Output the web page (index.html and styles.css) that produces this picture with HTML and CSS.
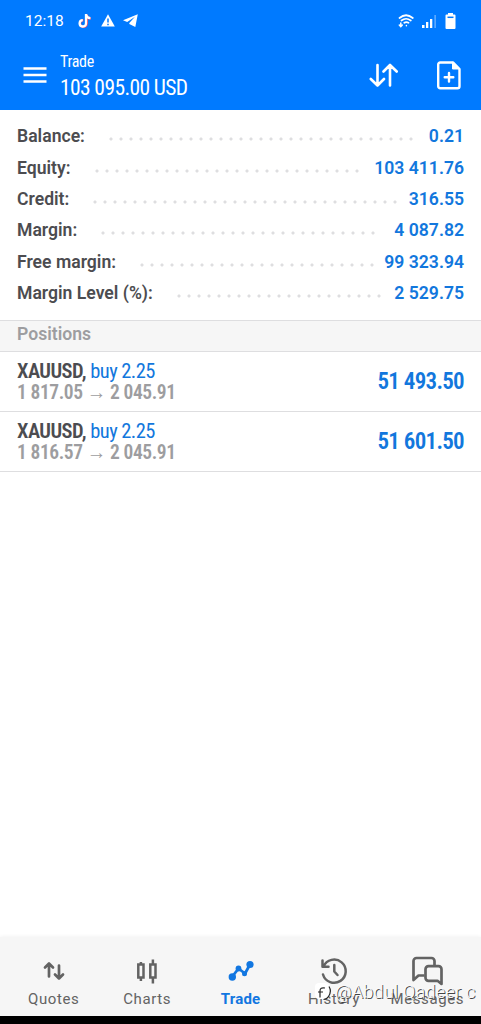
FILE: index.html
```html
<!DOCTYPE html>
<html lang="en">
<head>
  <meta charset="UTF-8">
  <meta name="viewport" content="width=device-width, initial-scale=1">
  <title>Trade</title>
  <link rel="stylesheet" href="styles.css">
</head>
<body>
  <div class="app">
    <header class="header">
      <div class="status-bar">
        <span class="clock">12:18</span>
        <svg class="tiktok" width="14" height="16" viewBox="0 0 14 16" fill="none" stroke-width="2.3">
          <path d="M8.8 1.5v9a3.4 3.4 0 1 1-3.4-3.4M8.8 2c.3 2.400 1.800 3.500 4 3.600" stroke="#f0506e"/>
          <path d="M8 1v9.500a3.200 3.200 0 1 1-3.200-3.400M8 1.500c.4 2.300 1.900 3.500 4.400 3.600" stroke="#fff"/>
        </svg>
        <svg class="warning" width="14" height="13" viewBox="0 0 14 13">
          <path d="M7 .3 13.800 12.500H.2z" fill="#fff"/>
          <path d="M7 4.500v4M7 9.700v1.500" stroke="#007aff" stroke-width="1.500"/>
        </svg>
        <svg class="telegram" width="15" height="13" viewBox="0 0 15 13" fill="#fff">
          <path d="M14.800.2 0 6.200l4.200 1.700L12 2.700 6.300 8.900v1.200l6 2.900z"/>
        </svg>
        <div class="status-right">
          <svg width="16" height="14" viewBox="0 0 16 14" fill="none" stroke="#fff" stroke-width="1.700" stroke-linecap="round">
            <path d="M1.500 4Q8-1.500 14.800 4M3.500 6.500Q8 3 12.800 6.500M6.300 8.800Q8.300 7.500 10.500 8.800"/>
            <path d="M8.400 11.600v.1M2.800 9v3.500M1.300 11l1.500 1.700L4.300 11" stroke-width="1.500"/>
          </svg>
          <svg class="signal" width="15" height="14" viewBox="0 0 15 14" fill="#fff">
            <path d="M0 11h2.500v3H0zM4 8h2.300v6H4zM8 5h2.300v9H8z"/>
            <path d="M12.300 1H14v13h-1.700z" opacity=".35"/>
          </svg>
          <svg width="11" height="16" viewBox="0 0 11 16">
            <path d="M3 0h5v1.500h1.500a1 1 0 0 1 1 1V15a1 1 0 0 1-1 1h-8a1 1 0 0 1-1-1V2.500a1 1 0 0 1 1-1H3z" fill="#fff"/>
            <path d="M2.500 4.300h6" stroke="#007aff" stroke-width="1.500"/>
          </svg>
        </div>
      </div>
      <div class="toolbar">
        <svg width="24" height="16" viewBox="0 0 24 16" stroke="#fff" stroke-width="2.300">
          <path d="M.5 1.500h23M.5 8h23M.5 14.500h23"/>
        </svg>
        <div class="title">
          <div class="title-name">Trade</div>
          <div class="title-sum">103 095.00 USD</div>
        </div>
        <svg class="sort" width="29" height="24" viewBox="0 0 29 24" fill="none" stroke="#fff" stroke-width="2.600" stroke-linecap="round" stroke-linejoin="round">
          <path d="M8.500 2v20.500M1.800 16l6.700 6.500L15 16M21 22.500V2M14.500 8.500 21 2l6.700 6.500"/>
        </svg>
        <svg width="24" height="29" viewBox="0 0 24 29" fill="none" stroke="#fff" stroke-width="2.400" stroke-linejoin="round" stroke-linecap="round">
          <path d="M3.200 1.500h13L22.500 8v17.300a2 2 0 0 1-2 2H3.200a2 2 0 0 1-2-2V3.500a2 2 0 0 1 2-2z"/>
          <path d="M15.500 1.500V8h7z" fill="#fff" stroke-width="1"/>
          <path d="M12 12v8.500M7.700 16.300h8.600"/>
        </svg>
      </div>
    </header>

    <main class="content">
      <dl class="account">
        <div class="row"><dt>Balance:</dt><span class="dots"></span><dd>0.21</dd></div>
        <div class="row"><dt>Equity:</dt><span class="dots"></span><dd>103 411.76</dd></div>
        <div class="row"><dt>Credit:</dt><span class="dots"></span><dd>316.55</dd></div>
        <div class="row"><dt>Margin:</dt><span class="dots"></span><dd>4 087.82</dd></div>
        <div class="row"><dt>Free margin:</dt><span class="dots"></span><dd>99 323.94</dd></div>
        <div class="row"><dt>Margin Level (%):</dt><span class="dots"></span><dd>2 529.75</dd></div>
      </dl>
      <h2 class="section">Positions</h2>
      <div class="position">
        <div>
          <div class="symbol"><b>XAUUSD,</b> <span>buy 2.25</span></div>
          <div class="prices">1 817.05 <i>→</i> 2 045.91</div>
        </div>
        <div class="profit">51 493.50</div>
      </div>
      <div class="position">
        <div>
          <div class="symbol"><b>XAUUSD,</b> <span>buy 2.25</span></div>
          <div class="prices">1 816.57 <i>→</i> 2 045.91</div>
        </div>
        <div class="profit">51 601.50</div>
      </div>
    </main>

    <nav class="tabs">
      <div class="tab">
        <svg width="32" height="32" viewBox="0 0 32 32" fill="none" stroke="currentColor" stroke-width="2.700" stroke-linecap="round" stroke-linejoin="round">
          <path d="M11 21.500V8.500M7 12.500l4-4 4 4M21 10.500V23.500M17 19.500l4 4 4-4"/>
        </svg>
        <span>Quotes</span>
      </div>
      <div class="tab">
        <svg width="32" height="32" viewBox="0 0 32 32" fill="none" stroke="currentColor" stroke-width="2.500">
          <path d="M7.300 9.500h5.200v13H7.300zM19.300 9.500h5.200v13h-5.200zM9.900 7v2.500M9.900 22.500V26M21.900 4.500v5M21.900 22.500V28.500"/>
        </svg>
        <span>Charts</span>
      </div>
      <div class="tab active">
        <svg width="32" height="32" viewBox="0 0 32 32" fill="none" stroke="currentColor" stroke-width="2.800" stroke-linejoin="round">
          <path d="m7 22 6.500-8.500 6.500 5 5-9"/>
          <g fill="currentColor" stroke="none"><circle cx="7.300" cy="22" r="3.700"/><circle cx="13.500" cy="13.500" r="2.900"/><circle cx="19.500" cy="18.800" r="2.500"/><circle cx="25" cy="9.500" r="3.600"/></g>
        </svg>
        <span>Trade</span>
      </div>
      <div class="tab">
        <svg width="32" height="32" viewBox="0 0 32 32" fill="none" stroke="currentColor" stroke-width="2.500" stroke-linecap="round" stroke-linejoin="round">
          <path d="M5.500 11.500A11.600 11.600 0 1 1 5 19.500M4.500 5.500v6.300h6M16.300 10v6.500l3.200 3.500"/>
        </svg>
        <span>History</span>
      </div>
      <div class="tab">
        <svg width="32" height="32" viewBox="0 0 32 32" fill="none" stroke="currentColor" stroke-width="2.700" stroke-linejoin="round">
          <path d="M13.500 20.500H7.500L2.500 25V6a3 3 0 0 1 3-3h15a3 3 0 0 1 3 3v5"/>
          <path d="M17.500 11.200h10a3 3 0 0 1 3 3V29l-4-3.200h-9a3 3 0 0 1-3-3v-8.600a3 3 0 0 1 3-3z"/>
        </svg>
        <span>Messages</span>
      </div>
    </nav>
    <div class="watermark">
      <svg width="17" height="18" viewBox="0 0 17 18">
        <rect width="14" height="16" rx="4" fill="#fff"/>
        <path d="M14 3.500q3 5-.5 10-2 3-5 3M5 14.500V8q0-4 5-3M3 9h5" fill="none" stroke="#222" stroke-width="1.200"/>
      </svg>
      <span>@Abdul Qadeer c</span>
    </div>
    <div class="bottom-bar"></div>
  </div>
</body>
</html>
```
FILE: styles.css
```css
* {
  box-sizing: border-box;
}

body {
  margin: 0;
  font-family: Roboto, "Liberation Sans", sans-serif;
  background: #fff;
}

svg {
  display: block;
  flex-shrink: 0;
}

.app {
  position: relative;
  display: flex;
  flex-direction: column;
  height: 1024px;
  overflow: hidden;
}

.header {
  height: 110px;
  background: #007aff;
  color: #fff;
}

.status-bar {
  display: flex;
  align-items: center;
  height: 40px;
  padding: 1px 25px 0 25px;
}

.clock {
  width: 53px;
  font-size: 15.5px;
}

.warning {
  margin-left: 9px;
}

.telegram {
  margin-left: 8px;
}

.status-right {
  display: flex;
  align-items: center;
  margin-left: auto;
}

.signal {
  margin: 0 8px 0 8px;
}

.toolbar {
  display: flex;
  align-items: center;
  height: 70px;
  padding: 0 20px 0 23px;
}

.title {
  flex: 1;
  margin-left: 13px;
  padding-top: 2px;
  font-family: "Roboto Condensed", Roboto, sans-serif;
  font-stretch: 75%;
}

.title-name {
  font-size: 16px;
  line-height: 22px;
  letter-spacing: -0.3px;
}

.title-sum {
  font-size: 21.5px;
  line-height: 29px;
  letter-spacing: -0.6px;
}

.sort {
  margin-right: 39px;
}

.content {
  flex: 1;
}

.account {
  height: 210px;
  margin: 0;
  padding: 11.3px 17px 0;
}

.row {
  display: flex;
  height: 31.4px;
  line-height: 31px;
  font-size: 17.6px;
  font-weight: 600;
  color: #4c4c50;
}

.row dd {
  margin: 0;
  color: #1277dd;
}

.dots {
  flex: 1;
  height: 4px;
  margin: 16px 7px 0 21px;
}

/* whole dots only, no clipped one at the end */
.dots::before {
  content: "";
  display: block;
  width: round(down, 100%, 10px);
  height: 4px;
  background: radial-gradient(circle, #dedee0 1.2px, transparent 1.9px) 0 0 / 10px 4px repeat-x;
}

.section {
  height: 32px;
  margin: 0;
  padding-left: 17px;
  border-top: 1px solid #dedee0;
  border-bottom: 1px solid #dedee0;
  background: #f6f6f6;
  color: #9d9da0;
  font-size: 17.6px;
  font-weight: 600;
  line-height: 27px;
}

.position {
  display: flex;
  justify-content: space-between;
  align-items: center;
  height: 60px;
  padding: 0 17px;
  border-bottom: 1px solid #dedee0;
  font-family: "Roboto Condensed", Roboto, sans-serif;
  font-stretch: 75%;
}

.symbol {
  font-size: 20.5px;
  line-height: 22px;
  letter-spacing: -0.55px;
  color: #4c4c50;
}

.symbol b {
  font-weight: 600;
}

.symbol span {
  color: #1277dd;
}

.prices {
  font-size: 19.5px;
  font-weight: 600;
  line-height: 21px;
  letter-spacing: -0.4px;
  color: #9d9da0;
}

.prices i {
  font-style: normal;
  font-weight: 400;
}

.profit {
  font-size: 23px;
  font-weight: 600;
  letter-spacing: -0.7px;
  color: #1277dd;
}

.tabs {
  display: flex;
  height: 79px;
  padding: 18px 7px 0;
  background: #f6f6f6;
  box-shadow: 0 0 4px #eee;
  color: #636363;
}

.tab {
  flex: 1;
  display: flex;
  flex-direction: column;
  align-items: center;
  font-size: 15px;
  line-height: 24px;
  letter-spacing: 0.6px;
}

.active {
  color: #1277e1;
  font-weight: 700;
  letter-spacing: 0.2px;
}

.watermark {
  position: absolute;
  left: 315px;
  top: 982px;
  display: flex;
  align-items: center;
  gap: 3px;
  color: #fafafa;
  font-size: 18px;
  font-weight: 300;
  line-height: 20px;
  letter-spacing: 0.3px;
  white-space: nowrap;
  text-shadow: 1px 1px 0 #444;
}

.bottom-bar {
  height: 8px;
  background: #000;
}
```
